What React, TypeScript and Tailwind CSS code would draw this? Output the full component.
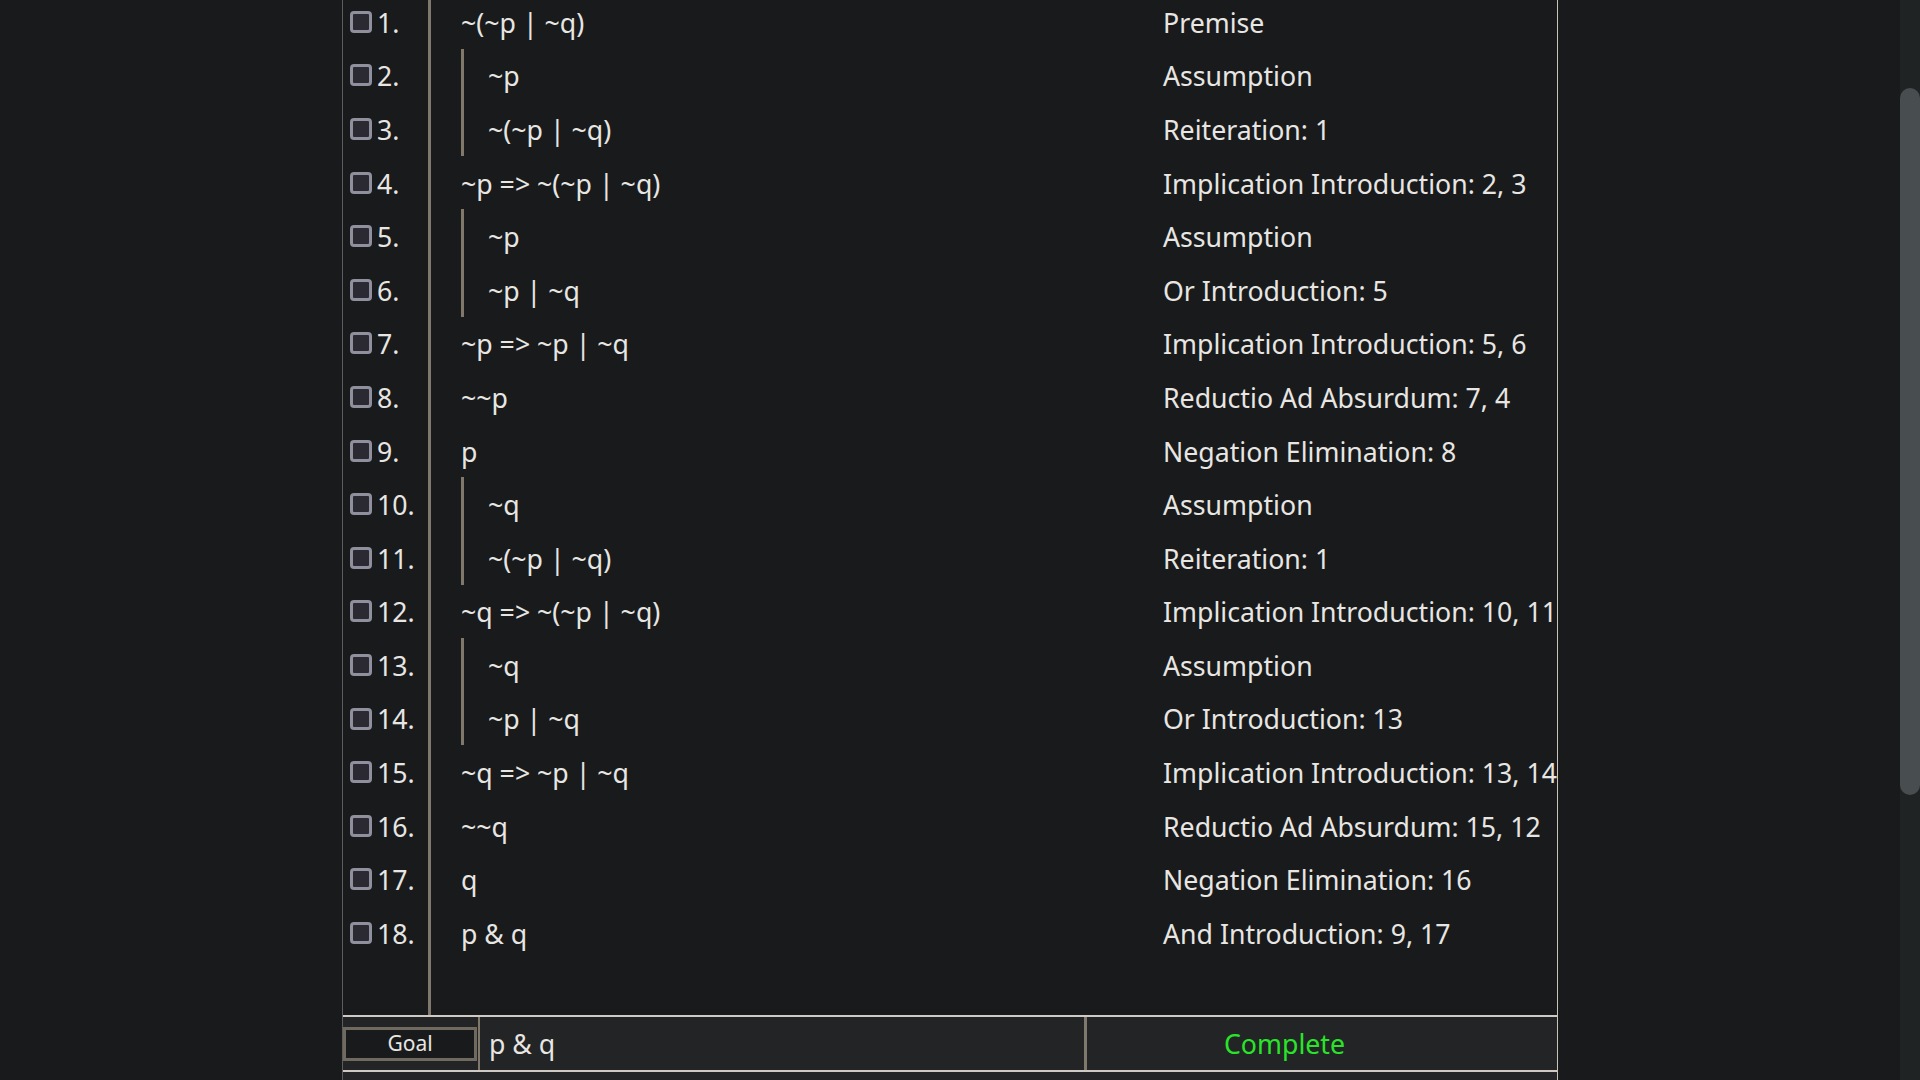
import React from 'react';

type Line = { n: number; f: string; j: string; d: number };

const lines: Line[] = [
  { n: 1, f: '~(~p | ~q)', j: 'Premise', d: 0 },
  { n: 2, f: '~p', j: 'Assumption', d: 1 },
  { n: 3, f: '~(~p | ~q)', j: 'Reiteration: 1', d: 1 },
  { n: 4, f: '~p => ~(~p | ~q)', j: 'Implication Introduction: 2, 3', d: 0 },
  { n: 5, f: '~p', j: 'Assumption', d: 1 },
  { n: 6, f: '~p | ~q', j: 'Or Introduction: 5', d: 1 },
  { n: 7, f: '~p => ~p | ~q', j: 'Implication Introduction: 5, 6', d: 0 },
  { n: 8, f: '~~p', j: 'Reductio Ad Absurdum: 7, 4', d: 0 },
  { n: 9, f: 'p', j: 'Negation Elimination: 8', d: 0 },
  { n: 10, f: '~q', j: 'Assumption', d: 1 },
  { n: 11, f: '~(~p | ~q)', j: 'Reiteration: 1', d: 1 },
  { n: 12, f: '~q => ~(~p | ~q)', j: 'Implication Introduction: 10, 11', d: 0 },
  { n: 13, f: '~q', j: 'Assumption', d: 1 },
  { n: 14, f: '~p | ~q', j: 'Or Introduction: 13', d: 1 },
  { n: 15, f: '~q => ~p | ~q', j: 'Implication Introduction: 13, 14', d: 0 },
  { n: 16, f: '~~q', j: 'Reductio Ad Absurdum: 15, 12', d: 0 },
  { n: 17, f: 'q', j: 'Negation Elimination: 16', d: 0 },
  { n: 18, f: 'p & q', j: 'And Introduction: 9, 17', d: 0 },
];

function Row({ line }: { line: Line }) {
  return (
    <div className="flex h-[53.6px] shrink-0">
      <div className="w-[88px] shrink-0 h-full border-r-[3px] border-[#80786b] flex items-center pl-[7px] gap-[5px]">
        <div className="w-[22px] h-[22px] rounded-[4px] border-[3px] border-[#8f8f9d] bg-[#2b2a33] shrink-0" />
        <span className="pt-[2px]">{line.n}.</span>
      </div>
      <div className="w-[732px] shrink-0 h-full pl-[30px] flex">
        {line.d > 0 ? (
          <div className="h-full border-l-[3px] border-[#80786b] pl-[24px] pt-[2px] flex items-center">{line.f}</div>
        ) : (
          <div className="h-full pt-[2px] flex items-center">{line.f}</div>
        )}
      </div>
      <div className="flex-1 min-w-0 h-full pt-[2px] flex items-center whitespace-nowrap">{line.j}</div>
    </div>
  );
}

export default function App() {
  return (
    <div
      className="h-screen w-screen overflow-hidden flex bg-[#181a1b] text-[#e8e6e3] text-[26.7px]"
      style={{ fontFamily: '"Noto Sans", "Open Sans", sans-serif' }}
    >
      <div className="flex-1 flex justify-center">
        <div className="w-[1216px] h-full flex flex-col border-l border-l-[#5d5d5d] border-r border-r-[#c8c3bc]">
          <div className="h-[1015px] overflow-hidden flex flex-col shrink-0">
            <div className="-mt-[5px] flex-1 flex flex-col">
              {lines.map(l => (
                <Row key={l.n} line={l} />
              ))}
              <div className="flex-1 flex">
                <div className="w-[88px] shrink-0 border-r-[3px] border-[#80786b]" />
              </div>
            </div>
          </div>
          <div className="h-[2px] bg-[#cfcac3] shrink-0" />
          <div className="h-[53px] flex bg-[#222425] shrink-0">
            <div className="w-[135px] shrink-0 h-full flex items-center">
              <button className="w-[134px] h-[34px] border-[3px] border-[#6f695f] bg-[#181a1b] text-[21px] text-[#e8e6e3] flex items-center justify-center">
                Goal
              </button>
            </div>
            <div className="w-[2px] shrink-0 h-full bg-[#80786b]" />
            <div className="w-[604px] shrink-0 h-full flex items-center pl-[9px] pt-[2px]">p &amp; q</div>
            <div className="w-[3px] shrink-0 h-full bg-[#80786b]" />
            <div className="flex-1 h-full flex items-center pl-[137px] pt-[2px] text-[#2ae42a]">Complete</div>
          </div>
          <div className="h-[2px] bg-[#cfcac3] shrink-0" />
          <div className="flex-1 bg-[#232527]" />
        </div>
      </div>
      <div className="w-[20px] h-full bg-[#202324] pt-[88px]">
        <div className="w-[20px] h-[707px] rounded-full bg-[#484d50]" />
      </div>
    </div>
  );
}
